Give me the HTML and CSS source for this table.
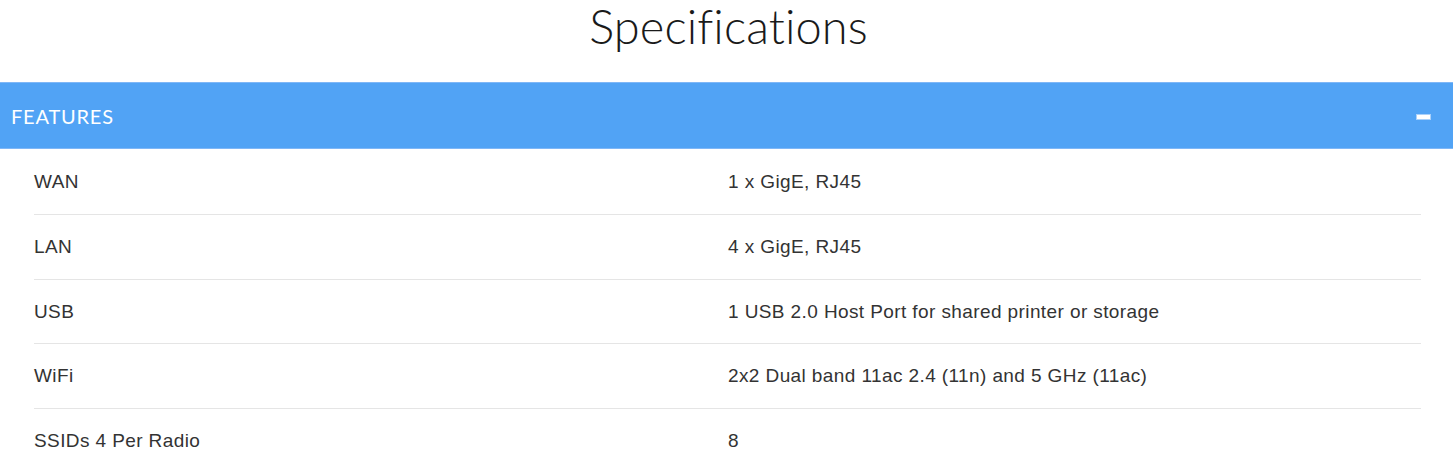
FILE: index.html
```html
<!DOCTYPE html>
<html lang="en">
<head>
<meta charset="utf-8">
<title>Specifications</title>
<link rel="stylesheet" href="styles.css">
</head>
<body>
<section class="specs">
  <h1 class="specs-title">Specifications</h1>
  <div class="accordion">
    <div class="accordion-header">
      <span class="accordion-label">FEATURES</span>
      <span class="accordion-toggle" aria-hidden="true"></span>
    </div>
    <div class="accordion-body">
      <div class="spec-row"><div class="spec-name">WAN</div><div class="spec-value">1 x GigE, RJ45</div></div>
      <div class="spec-row"><div class="spec-name">LAN</div><div class="spec-value">4 x GigE, RJ45</div></div>
      <div class="spec-row"><div class="spec-name">USB</div><div class="spec-value">1 USB 2.0 Host Port for shared printer or storage</div></div>
      <div class="spec-row"><div class="spec-name">WiFi</div><div class="spec-value">2x2 Dual band 11ac 2.4 (11n) and 5 GHz (11ac)</div></div>
      <div class="spec-row"><div class="spec-name">SSIDs 4 Per Radio</div><div class="spec-value">8</div></div>
    </div>
  </div>
</section>
</body>
</html>
```

FILE: styles.css
```css
* { box-sizing: border-box; }
html, body { margin: 0; padding: 0; background: #fff; }
body { font-family: "Liberation Sans", Arial, sans-serif; color: #333; }

.specs-title {
  margin: 0;
  padding-top: 1px;
  height: 82px;
  text-align: center;
  font-family: Lato, "Open Sans", sans-serif;
  font-weight: 300;
  font-size: 47px;
  line-height: 50px;
  letter-spacing: 0.1px;
  color: #1a1a1a;
  padding-left: 4px;
}

.accordion-header {
  display: flex;
  align-items: center;
  justify-content: space-between;
  height: 67px;
  padding: 0 23px 0 11px;
  background: #51a3f5;
  border-top: 1px solid #7fb7f7;
  border-bottom: 1px solid #7fb7f7;
}
.accordion-label {
  font-family: Lato, "Open Sans", sans-serif;
  font-size: 20px;
  color: #fff;
  letter-spacing: 0.8px;
}
.accordion-toggle {
  width: 13px;
  height: 4px;
  background: #fff;
  box-shadow: 0 0 0 1px #a9d0fa;
  margin-top: 3px;
}

.accordion-body { padding: 1px 32px 0 34px; }
.spec-row {
  display: grid;
  grid-template-columns: 1fr 1fr;
  padding: 20px 0;
  line-height: 23.75px;
  font-size: 19px;
  letter-spacing: 0.4px;
  border-bottom: 1px solid #e5e5e5;
}
.spec-value { padding-left: 0.5px; }
```
